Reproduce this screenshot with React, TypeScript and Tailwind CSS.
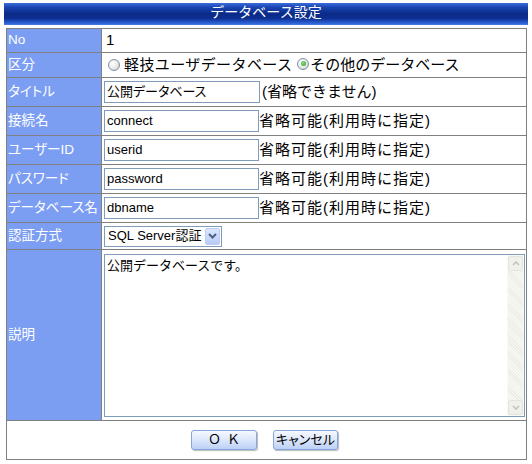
import React from "react";

const ja = "font-['Liberation_Sans','Noto_Sans_CJK_JP',sans-serif]";

function Radio({ checked }: { checked?: boolean }) {
  return (
    <span className="relative inline-block h-[12px] w-[12px] shrink-0 rounded-full border border-[#7d8ea8] bg-[radial-gradient(circle_at_35%_35%,#ffffff_0%,#eeeeea_45%,#c9c9c2_100%)]">
      {checked && (
        <span className="absolute left-[2.5px] top-[2.5px] h-[5px] w-[5px] rounded-full bg-[radial-gradient(circle_at_40%_40%,#7fe07f_0%,#2f9a2f_100%)]" />
      )}
    </span>
  );
}

function Row({
  h,
  label,
  children,
  valueClass = "pl-[2px]",
}: {
  h: string;
  label: string;
  children: React.ReactNode;
  valueClass?: string;
}) {
  return (
    <div className={`flex border-b border-[#808080] ${h}`}>
      <div className="flex w-[95px] shrink-0 items-center whitespace-nowrap border-r border-[#808080] bg-[#7b9ef2] pl-[1px] text-[13.5px] text-white [font-feature-settings:'palt']">
        {label}
      </div>
      <div className={`flex flex-1 items-center whitespace-nowrap text-[15px] text-black ${valueClass}`}>
        {children}
      </div>
    </div>
  );
}

function TextBox({ value, w = "w-[155px]" }: { value: string; w?: string }) {
  return (
    <div
      className={`flex h-[22px] shrink-0 items-center border border-[#7f9db9] bg-white pl-[2px] text-[13px] [font-feature-settings:'palt'] ${w}`}
    >
      {value}
    </div>
  );
}

function Button({ children, w }: { children: React.ReactNode; w: string }) {
  return (
    <button
      type="button"
      className={`flex h-[20px] items-center justify-center rounded-[3px] border border-[#87a6dc] bg-[linear-gradient(180deg,#f6f9ff_0%,#dfe9fc_45%,#bcd0f6_100%)] text-[13px] text-black shadow-[1px_1px_1px_#b8b8b8] ${w}`}
    >
      {children}
    </button>
  );
}

export default function App() {
  return (
    <div className={`h-[464px] w-[532px] bg-white ${ja}`}>
      <div className="ml-[4px] h-[3px]" />
      <div className="ml-[4px] flex h-[22px] w-[524px] items-center justify-center bg-[linear-gradient(180deg,#3a6cdc_0%,#1a44b0_20%,#0a2a86_50%,#0d2f92_70%,#2d62d6_92%,#4a7ee8_100%)] pb-[3px] text-[14px] text-white">
        データベース設定
      </div>
      <div className="ml-[6px] mt-[3px] w-[521px] border border-[#808080]">
        <Row h="h-[24px]" label="No" valueClass="pl-[4px]">
          1
        </Row>
        <Row h="h-[25px]" label="区分" valueClass="pl-[6px]">
          <Radio />
          <span className="ml-[4px] tracking-[0.4px]">軽技ユーザデータベース</span>
          <span className="ml-[5px]">
            <Radio checked />
          </span>
          <span className="ml-[1px]">その他のデータベース</span>
        </Row>
        <Row h="h-[29px]" label="タイトル">
          <TextBox value="公開データベース" w="w-[156px]" />
          <span className="ml-[2px]">(省略できません)</span>
        </Row>
        <Row h="h-[29px]" label="接続名">
          <TextBox value="connect" />
          <span className="tracking-[1px]">省略可能(利用時に指定)</span>
        </Row>
        <Row h="h-[29px]" label="ユーザーID">
          <TextBox value="userid" />
          <span className="tracking-[1px]">省略可能(利用時に指定)</span>
        </Row>
        <Row h="h-[29px]" label="パスワード">
          <TextBox value="password" />
          <span className="tracking-[1px]">省略可能(利用時に指定)</span>
        </Row>
        <Row h="h-[29px]" label="データベース名">
          <TextBox value="dbname" />
          <span className="tracking-[1px]">省略可能(利用時に指定)</span>
        </Row>
        <Row h="h-[27px]" label="認証方式">
          <div className="flex h-[21px] w-[118px] items-center border border-[#7f9db9] bg-white pl-[3px] pr-[1px] text-[13px]">
            <span className="flex-1">SQL Server認証</span>
            <span className="flex h-[17px] w-[15px] items-center justify-center rounded-[2px] border border-[#bccdf5] bg-[linear-gradient(180deg,#dce6fd_0%,#b8cbf8_100%)]">
              <svg width="9" height="6" viewBox="0 0 9 6">
                <path d="M1 1 L4.5 4.5 L8 1" fill="none" stroke="#4d6185" strokeWidth="2" />
              </svg>
            </span>
          </div>
        </Row>
        <Row h="h-[171px]" label="説明">
          <div className="flex h-[163px] w-[421px] border border-[#7f9db9] bg-white">
            <div className="flex-1 whitespace-pre pl-[2px] pt-[2px] text-[13px] leading-[18px]">
              公開データベースです。
            </div>
            <div className="flex w-[17px] flex-col bg-[#f8f8f4] p-[1px]">
              <div className="flex h-[15px] items-center justify-center rounded-[2px] border border-[#e4e4dc] bg-[#f1f1ec]">
                <svg width="8" height="5" viewBox="0 0 8 5">
                  <path d="M1 4 L4 1 L7 4" fill="none" stroke="#c4c4bc" strokeWidth="1.6" />
                </svg>
              </div>
              <div className="flex-1 bg-[repeating-linear-gradient(45deg,#f8f8f4_0px,#f8f8f4_1px,#ededE6_1px,#ededE6_2px)]" />
              <div className="flex h-[15px] items-center justify-center rounded-[2px] border border-[#e4e4dc] bg-[#f1f1ec]">
                <svg width="8" height="5" viewBox="0 0 8 5">
                  <path d="M1 1 L4 4 L7 1" fill="none" stroke="#c4c4bc" strokeWidth="1.6" />
                </svg>
              </div>
            </div>
          </div>
        </Row>
        <div className="flex h-[38px] items-center justify-center gap-[16px] pr-[4px]">
          <Button w="w-[66px]">
            <span className="tracking-[6px] pl-[6px]">ＯＫ</span>
          </Button>
          <Button w="w-[65px]">
            <span className="[font-feature-settings:'palt']">キャンセル</span>
          </Button>
        </div>
      </div>
    </div>
  );
}
